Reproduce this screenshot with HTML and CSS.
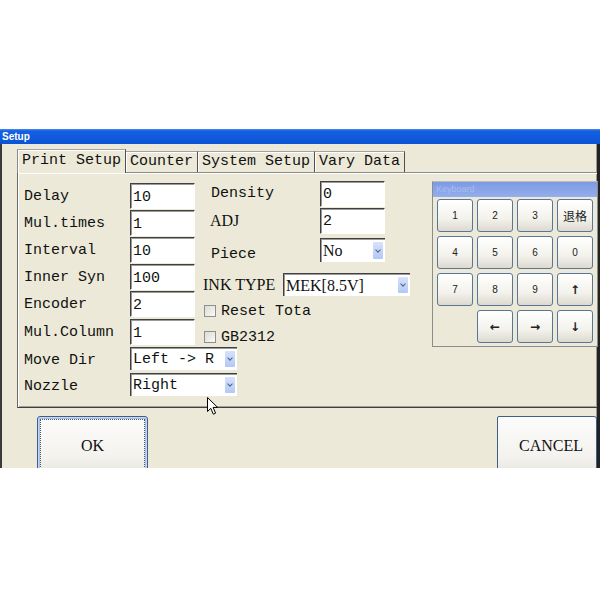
FILE: index.html
```html
<!DOCTYPE html>
<html lang="en">
<head>
    <meta charset="UTF-8">
    <meta name="viewport" content="width=device-width, initial-scale=1.0">
    <title>Setup</title>
    <link rel="stylesheet" href="styles.css">
</head>
<body>

    <div class="dialog">
        <div class="titlebar">Setup</div>

        <div class="dialog-body">
            <!-- Tabs -->
            <div class="tabs">
                <div class="tab active">Print Setup</div>
                <div class="tab">Counter</div>
                <div class="tab">System Setup</div>
                <div class="tab">Vary Data</div>
            </div>

            <div class="panel">
                <!-- Left column -->
                <div class="col-left">
                    <div class="row"><span class="label">Delay</span><input class="field" type="text" value="10"></div>
                    <div class="row"><span class="label">Mul.times</span><input class="field" type="text" value="1"></div>
                    <div class="row"><span class="label">Interval</span><input class="field" type="text" value="10"></div>
                    <div class="row"><span class="label">Inner Syn</span><input class="field" type="text" value="100"></div>
                    <div class="row"><span class="label">Encoder</span><input class="field" type="text" value="2"></div>
                    <div class="row"><span class="label">Mul.Column</span><input class="field" type="text" value="1"></div>
                    <div class="row"><span class="label">Move Dir</span><div class="select wide">Left -&gt; R<span class="arrow"></span></div></div>
                    <div class="row"><span class="label">Nozzle</span><div class="select wide">Right<span class="arrow"></span></div></div>
                </div>

                <!-- Middle column -->
                <div class="col-mid">
                    <div class="mrow density"><span class="mlabel">Density</span><input class="field" type="text" value="0"></div>
                    <div class="mrow adj"><span class="mlabel serif">ADJ</span><input class="field" type="text" value="2"></div>
                    <div class="mrow piece"><span class="mlabel">Piece</span><div class="select short serif">No<span class="arrow"></span></div></div>
                    <div class="mrow ink"><span class="ink-label serif">INK TYPE</span><div class="select ink-select serif">MEK[8.5V]<span class="arrow"></span></div></div>
                    <div class="mrow check reset"><span class="box"></span>Reset Tota</div>
                    <div class="mrow check gb"><span class="box"></span>GB2312</div>
                </div>

                <!-- On-screen keyboard -->
                <div class="keyboard">
                    <div class="kb-title">Keyboard</div>
                    <div class="keys">
                        <div class="key">1</div>
                        <div class="key">2</div>
                        <div class="key">3</div>
                        <div class="key cjk">退格</div>
                        <div class="key">4</div>
                        <div class="key">5</div>
                        <div class="key">6</div>
                        <div class="key">0</div>
                        <div class="key">7</div>
                        <div class="key">8</div>
                        <div class="key">9</div>
                        <div class="key arrow-key">&#8593;</div>
                        <div class="key-empty"></div>
                        <div class="key arrow-key">&#8592;</div>
                        <div class="key arrow-key">&#8594;</div>
                        <div class="key arrow-key">&#8595;</div>
                    </div>
                </div>

                <!-- mouse pointer -->
                <svg class="cursor" width="13" height="19" viewBox="0 0 13 19">
                    <path d="M0.5 0.5 L0.5 14.5 L3.8 11.3 L6.3 17.2 L8.6 16.2 L6.1 10.4 L10.6 10.4 Z" fill="#fff" stroke="#000" stroke-width="1"/>
                </svg>
            </div>

            <div class="buttons">
                <button class="btn ok"><span class="focus">OK</span></button>
                <button class="btn cancel">CANCEL</button>
            </div>
        </div>
    </div>

</body>
</html>
```

FILE: styles.css
```css
/* General */
* {
    margin: 0;
    padding: 0;
    box-sizing: border-box;
}

body {
    background-color: #fff;
    font-family: 'Liberation Mono', monospace;
    font-size: 15px;
    color: #111;
    width: 600px;
    height: 600px;
    overflow: hidden;
}

.serif {
    font-family: 'Liberation Serif', serif;
    font-size: 16px;
}

/* Window */
.dialog {
    margin-top: 129px;
    width: 600px;
    height: 339px;
    overflow: hidden;
    display: flex;
    flex-direction: column;
}

.titlebar {
    height: 15px;
    background: linear-gradient(#4a8cf5 0, #1660e0 2px, #0a53d6 100%);
    color: #fff;
    font-family: 'Liberation Sans', sans-serif;
    font-weight: bold;
    font-size: 10px;
    line-height: 15px;
    padding-left: 2px;
}

.dialog-body {
    flex: 1;
    background-color: #ece9d8;
    border-left: 2px solid #3a3a3a;
    border-right: 3px solid #222;
    box-shadow: inset -1px 0 #9a9a9a;
    padding: 5px 0 0 15px;
    display: flex;
    flex-direction: column;
}

/* Tabs */
.tabs {
    display: flex;
    align-items: flex-end;
    height: 23px;
}

.tab {
    height: 21px;
    line-height: 20px;
    padding: 0 4px;
    border-top: 1px solid #a3a3a3;
    border-right: 1px solid #505050;
    box-shadow: inset 1px 1px #fff;
    white-space: nowrap;
}

.tab.active {
    height: 24px;
    line-height: 22px;
    border-left: 1px solid #8a8a8a;
    position: relative;
    z-index: 1;
    background-color: #ece9d8;
    margin-bottom: -1px;
}

/* Tab panel */
.panel {
    position: relative;
    height: 236px;
    border-top: 1px solid #8a8a8a;
    border-left: 1px solid #6a6a6a;
    border-bottom: 1px solid #404040;
    box-shadow: inset 1px 1px #fff, inset 0 -1px #a0a0a0;
    display: flex;
    align-items: flex-start;
}

/* Left column */
.col-left {
    width: 171px;
    flex-shrink: 0;
    margin: 10px 0 0 6px;
    display: grid;
    grid-template-columns: 171px;
    grid-template-rows: 27px 27px 27px 27px 28px 28px 26px 26px;
}

.row {
    display: flex;
    align-items: flex-start;
}

.label {
    flex-shrink: 0;
    width: 106px;
    height: 26px;
    line-height: 28px;
    white-space: nowrap;
}

.field {
    flex-shrink: 0;
    width: 65px;
    height: 26px;
    background: #fff;
    border-top: 1px solid #404040;
    border-left: 1px solid #404040;
    border-right: 1px solid #fff;
    border-bottom: 1px solid #fff;
    box-shadow: inset 1px 1px #9a9a9a;
    font-family: 'Liberation Mono', monospace;
    font-size: 15px;
    color: #111;
    padding: 2px 0 0 2px;
    outline: none;
}

/* Drop-down boxes */
.select {
    flex-shrink: 0;
    position: relative;
    height: 23px;
    background: #fff;
    border-top: 1px solid #404040;
    border-left: 1px solid #404040;
    box-shadow: inset 1px 1px #9a9a9a;
    padding-left: 2px;
    line-height: 23px;
    white-space: nowrap;
}

.select.wide {
    width: 107px;
}

.select.short {
    width: 65px;
    height: 24px;
    line-height: 24px;
}

.arrow {
    position: absolute;
    right: 2px;
    top: 3px;
    bottom: 3px;
    width: 10px;
    background: linear-gradient(#d7e2fb, #b4c8f5);
    border-radius: 1px;
}

.arrow::after {
    content: "";
    position: absolute;
    left: 3px;
    top: 50%;
    width: 3px;
    height: 3px;
    margin-top: -3px;
    border-right: 1px solid #4d6185;
    border-bottom: 1px solid #4d6185;
    transform: rotate(45deg);
}

/* Middle column */
.col-mid {
    width: 207px;
    flex-shrink: 0;
    margin: 7px 0 0 8px;
    display: flex;
    flex-direction: column;
}

.mrow {
    display: flex;
    align-items: center;
}

.mlabel {
    flex-shrink: 0;
    width: 117px;
    padding-left: 8px;
    white-space: nowrap;
}

.density { height: 27px; }
.adj { height: 27px; }
.adj .mlabel { padding-left: 7px; }
.piece { height: 24px; margin-top: 4px; }
.piece .mlabel { margin-top: 8px; }

.ink {
    height: 23px;
    margin-top: 11px;
}

.ink-label {
    flex-shrink: 0;
    width: 80px;
    white-space: nowrap;
    line-height: 28px;
}

.ink-select {
    width: 127px;
}

.check {
    height: 14px;
    padding-left: 1px;
    white-space: nowrap;
}

.reset { margin-top: 8px; }
.gb { margin-top: 12px; }

.box {
    width: 12px;
    height: 12px;
    margin-right: 5px;
    border: 1px solid #8f8f8f;
    background: linear-gradient(135deg, #dcdcd4, #fafaf8);
}

/* Keyboard */
.keyboard {
    flex-shrink: 0;
    margin: 8px 0 0 22px;
    width: 166px;
    height: 166px;
    border: 1px solid #8c8c8c;
    border-top-color: #bbb;
    background-color: #ece9d8;
}

.kb-title {
    height: 15px;
    background: linear-gradient(#7c9ae5, #94aeec);
    color: #a9bcf0;
    font-family: 'Liberation Sans', sans-serif;
    font-size: 9px;
    line-height: 15px;
    padding-left: 3px;
}

.keys {
    padding: 2px 0 0 4px;
    display: grid;
    grid-template-columns: repeat(4, 36px);
    grid-auto-rows: 33px;
    column-gap: 4px;
    row-gap: 4px;
}

.key {
    border: 1px solid #5a7596;
    border-radius: 3px;
    background: linear-gradient(#ffffff, #f3f2ec 60%, #dcd9cf);
    display: flex;
    align-items: center;
    justify-content: center;
    font-family: 'Liberation Sans', sans-serif;
    font-size: 10px;
    color: #222;
}

.key.cjk {
    font-family: 'Liberation Sans', 'Noto Sans CJK SC', sans-serif;
    font-size: 12px;
}

.key.arrow-key {
    font-family: 'DejaVu Sans', sans-serif;
    font-size: 12px;
    font-weight: bold;
}

/* Mouse pointer */
.cursor {
    position: absolute;
    left: 189px;
    top: 224px;
}

/* Bottom buttons */
.buttons {
    margin-top: 8px;
    padding-left: 20px;
    display: flex;
    justify-content: space-between;
}

.btn {
    height: 60px;
    border: 1px solid #3f5f86;
    border-radius: 3px;
    background: linear-gradient(#fcfcfb, #f3f2ee 70%, #e6e4dc);
    font-family: 'Liberation Serif', serif;
    font-size: 16px;
    color: #111;
}

.btn.ok {
    width: 111px;
    padding: 2px;
    box-shadow: inset 0 0 0 1px #c3d4f7, inset 0 0 0 2px #a5c0ef;
}

.btn.ok .focus {
    display: flex;
    align-items: center;
    justify-content: center;
    height: 100%;
    border: 1px dotted #555;
}

.btn.cancel {
    width: 100px;
    padding-left: 8px;
    border-top-left-radius: 2px;
}
```
